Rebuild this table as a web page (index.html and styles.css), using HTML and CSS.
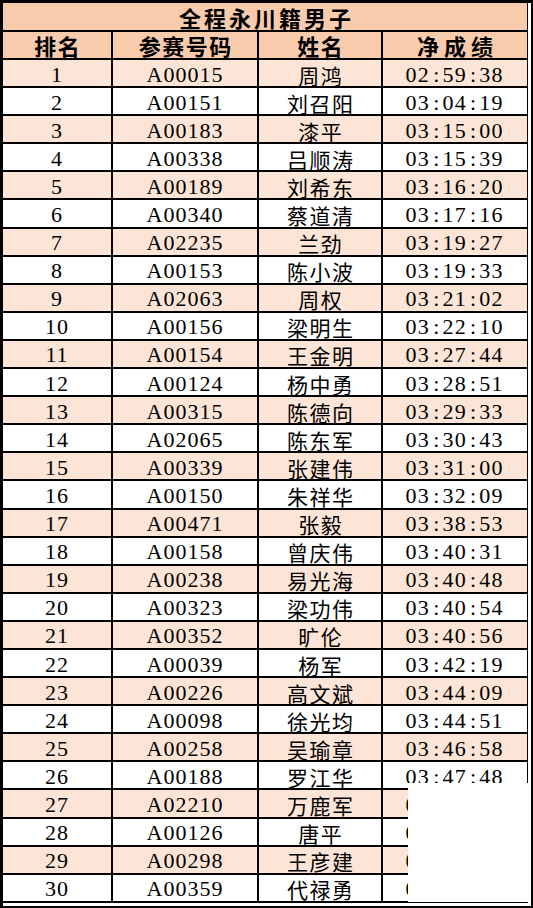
FILE: index.html
```html
<!DOCTYPE html>
<html lang="zh-CN">
<head>
<meta charset="utf-8">
<title>全程永川籍男子</title>
<link rel="stylesheet" href="styles.css">
</head>
<body>
<div class="frame">
  <div class="sheet">
    <div class="row title"><div class="cell span">全程永川籍男子</div></div>
    <div class="row head">
      <div class="cell c1">排名</div>
      <div class="cell c2">参赛号码</div>
      <div class="cell c3">姓名</div>
      <div class="cell c4 wide">净成绩</div>
    </div>
    <div class="row odd"><div class="cell c1 num">1</div><div class="cell c2 num">A00015</div><div class="cell c3 name">周鸿</div><div class="cell c4 num"><span class="time">02<span class="colon">:</span>59<span class="colon">:</span>38</span></div></div>
    <div class="row even"><div class="cell c1 num">2</div><div class="cell c2 num">A00151</div><div class="cell c3 name">刘召阳</div><div class="cell c4 num"><span class="time">03<span class="colon">:</span>04<span class="colon">:</span>19</span></div></div>
    <div class="row odd"><div class="cell c1 num">3</div><div class="cell c2 num">A00183</div><div class="cell c3 name">漆平</div><div class="cell c4 num"><span class="time">03<span class="colon">:</span>15<span class="colon">:</span>00</span></div></div>
    <div class="row even"><div class="cell c1 num">4</div><div class="cell c2 num">A00338</div><div class="cell c3 name">吕顺涛</div><div class="cell c4 num"><span class="time">03<span class="colon">:</span>15<span class="colon">:</span>39</span></div></div>
    <div class="row odd"><div class="cell c1 num">5</div><div class="cell c2 num">A00189</div><div class="cell c3 name">刘希东</div><div class="cell c4 num"><span class="time">03<span class="colon">:</span>16<span class="colon">:</span>20</span></div></div>
    <div class="row even"><div class="cell c1 num">6</div><div class="cell c2 num">A00340</div><div class="cell c3 name">蔡道清</div><div class="cell c4 num"><span class="time">03<span class="colon">:</span>17<span class="colon">:</span>16</span></div></div>
    <div class="row odd"><div class="cell c1 num">7</div><div class="cell c2 num">A02235</div><div class="cell c3 name">兰劲</div><div class="cell c4 num"><span class="time">03<span class="colon">:</span>19<span class="colon">:</span>27</span></div></div>
    <div class="row even"><div class="cell c1 num">8</div><div class="cell c2 num">A00153</div><div class="cell c3 name">陈小波</div><div class="cell c4 num"><span class="time">03<span class="colon">:</span>19<span class="colon">:</span>33</span></div></div>
    <div class="row odd"><div class="cell c1 num">9</div><div class="cell c2 num">A02063</div><div class="cell c3 name">周权</div><div class="cell c4 num"><span class="time">03<span class="colon">:</span>21<span class="colon">:</span>02</span></div></div>
    <div class="row even"><div class="cell c1 num">10</div><div class="cell c2 num">A00156</div><div class="cell c3 name">梁明生</div><div class="cell c4 num"><span class="time">03<span class="colon">:</span>22<span class="colon">:</span>10</span></div></div>
    <div class="row odd"><div class="cell c1 num">11</div><div class="cell c2 num">A00154</div><div class="cell c3 name">王金明</div><div class="cell c4 num"><span class="time">03<span class="colon">:</span>27<span class="colon">:</span>44</span></div></div>
    <div class="row even"><div class="cell c1 num">12</div><div class="cell c2 num">A00124</div><div class="cell c3 name">杨中勇</div><div class="cell c4 num"><span class="time">03<span class="colon">:</span>28<span class="colon">:</span>51</span></div></div>
    <div class="row odd"><div class="cell c1 num">13</div><div class="cell c2 num">A00315</div><div class="cell c3 name">陈德向</div><div class="cell c4 num"><span class="time">03<span class="colon">:</span>29<span class="colon">:</span>33</span></div></div>
    <div class="row even"><div class="cell c1 num">14</div><div class="cell c2 num">A02065</div><div class="cell c3 name">陈东军</div><div class="cell c4 num"><span class="time">03<span class="colon">:</span>30<span class="colon">:</span>43</span></div></div>
    <div class="row odd"><div class="cell c1 num">15</div><div class="cell c2 num">A00339</div><div class="cell c3 name">张建伟</div><div class="cell c4 num"><span class="time">03<span class="colon">:</span>31<span class="colon">:</span>00</span></div></div>
    <div class="row even"><div class="cell c1 num">16</div><div class="cell c2 num">A00150</div><div class="cell c3 name">朱祥华</div><div class="cell c4 num"><span class="time">03<span class="colon">:</span>32<span class="colon">:</span>09</span></div></div>
    <div class="row odd"><div class="cell c1 num">17</div><div class="cell c2 num">A00471</div><div class="cell c3 name">张毅</div><div class="cell c4 num"><span class="time">03<span class="colon">:</span>38<span class="colon">:</span>53</span></div></div>
    <div class="row even"><div class="cell c1 num">18</div><div class="cell c2 num">A00158</div><div class="cell c3 name">曾庆伟</div><div class="cell c4 num"><span class="time">03<span class="colon">:</span>40<span class="colon">:</span>31</span></div></div>
    <div class="row odd"><div class="cell c1 num">19</div><div class="cell c2 num">A00238</div><div class="cell c3 name">易光海</div><div class="cell c4 num"><span class="time">03<span class="colon">:</span>40<span class="colon">:</span>48</span></div></div>
    <div class="row even"><div class="cell c1 num">20</div><div class="cell c2 num">A00323</div><div class="cell c3 name">梁功伟</div><div class="cell c4 num"><span class="time">03<span class="colon">:</span>40<span class="colon">:</span>54</span></div></div>
    <div class="row odd"><div class="cell c1 num">21</div><div class="cell c2 num">A00352</div><div class="cell c3 name">旷伦</div><div class="cell c4 num"><span class="time">03<span class="colon">:</span>40<span class="colon">:</span>56</span></div></div>
    <div class="row even"><div class="cell c1 num">22</div><div class="cell c2 num">A00039</div><div class="cell c3 name">杨军</div><div class="cell c4 num"><span class="time">03<span class="colon">:</span>42<span class="colon">:</span>19</span></div></div>
    <div class="row odd"><div class="cell c1 num">23</div><div class="cell c2 num">A00226</div><div class="cell c3 name">高文斌</div><div class="cell c4 num"><span class="time">03<span class="colon">:</span>44<span class="colon">:</span>09</span></div></div>
    <div class="row even"><div class="cell c1 num">24</div><div class="cell c2 num">A00098</div><div class="cell c3 name">徐光均</div><div class="cell c4 num"><span class="time">03<span class="colon">:</span>44<span class="colon">:</span>51</span></div></div>
    <div class="row odd"><div class="cell c1 num">25</div><div class="cell c2 num">A00258</div><div class="cell c3 name">吴瑜章</div><div class="cell c4 num"><span class="time">03<span class="colon">:</span>46<span class="colon">:</span>58</span></div></div>
    <div class="row even"><div class="cell c1 num">26</div><div class="cell c2 num">A00188</div><div class="cell c3 name">罗江华</div><div class="cell c4 num"><span class="time">03<span class="colon">:</span>47<span class="colon">:</span>48</span></div></div>
    <div class="row odd"><div class="cell c1 num">27</div><div class="cell c2 num">A02210</div><div class="cell c3 name">万鹿军</div><div class="cell c4 num"><span class="time cut">03<span class="colon">:</span></span></div></div>
    <div class="row even"><div class="cell c1 num">28</div><div class="cell c2 num">A00126</div><div class="cell c3 name">唐平</div><div class="cell c4 num"><span class="time cut">03<span class="colon">:</span></span></div></div>
    <div class="row odd"><div class="cell c1 num">29</div><div class="cell c2 num">A00298</div><div class="cell c3 name">王彦建</div><div class="cell c4 num"><span class="time cut">03<span class="colon">:</span></span></div></div>
    <div class="row even"><div class="cell c1 num">30</div><div class="cell c2 num">A00359</div><div class="cell c3 name">代禄勇</div><div class="cell c4 num"><span class="time cut">03<span class="colon">:</span></span></div></div>
  </div>
  <div class="cover"></div>
</div>
</body>
</html>
```

FILE: styles.css
```css
html, body {
  margin: 0;
  padding: 0;
  background: #ffffff;
}

.frame {
  position: relative;
  width: 533px;
  height: 908px;
  box-sizing: border-box;
  border-top: 3px solid #000;
  border-left: 3px solid #000;
  border-right: 2px solid #000;
  border-bottom: 2px solid #000;
  padding-right: 3px;
  padding-bottom: 2px;
  background: #ffffff;
  overflow: hidden;
}

.sheet {
  width: 525px;
  display: flex;
  flex-direction: column;
}

.row {
  display: flex;
  height: 28.1px;
  box-sizing: border-box;
  flex: none;
}

.row.title {
  height: 29px;
  background: #f8cbad;
}

.row.head {
  height: 28px;
  background: #f8cbad;
}

.row.odd {
  background: #fce4d6;
}

.row.even {
  background: #ffffff;
}

.cell {
  box-sizing: border-box;
  height: 100%;
  border-bottom: 2px solid #000;
  border-right: 2px solid #000;
  display: flex;
  align-items: center;
  justify-content: center;
  color: #000;
  white-space: nowrap;
}

.c1 { width: 110px; }
.c2 { width: 146px; }
.c3 { width: 124px; }
.c4 { width: 145px; border-right-width: 1px; }

.span {
  width: 525px;
  border-right-width: 1px;
  font-family: "Noto Sans CJK SC", sans-serif;
  font-weight: 700;
  font-size: 22px;
  line-height: 24px;
  letter-spacing: 3px;
  text-indent: 3px;
  padding-top: 1px;
}

.head .cell {
  font-family: "Noto Sans CJK SC", sans-serif;
  font-weight: 700;
  font-size: 22px;
  line-height: 24px;
  letter-spacing: 1.5px;
  text-indent: 1.5px;
}

.head .cell.wide {
  letter-spacing: 5px;
  text-indent: 5px;
}

.num {
  font-family: "Liberation Serif", serif;
  font-size: 22px;
  line-height: 22px;
  letter-spacing: 1px;
  padding-top: 3px;
}

.name {
  font-family: "Noto Sans CJK SC", sans-serif;
  font-size: 21px;
  line-height: 22px;
  letter-spacing: 1.5px;
  text-indent: 1.5px;
  padding-top: 3px;
}

.time {
  display: inline-block;
  width: 99px;
  letter-spacing: 1.3px;
  text-align: left;
}

.colon {
  display: inline-block;
  width: 12.3px;
  text-align: center;
  letter-spacing: 0;
}

.cover {
  position: absolute;
  left: 405px;
  top: 780px;
  width: 123px;
  height: 119px;
  background: #ffffff;
}
```
